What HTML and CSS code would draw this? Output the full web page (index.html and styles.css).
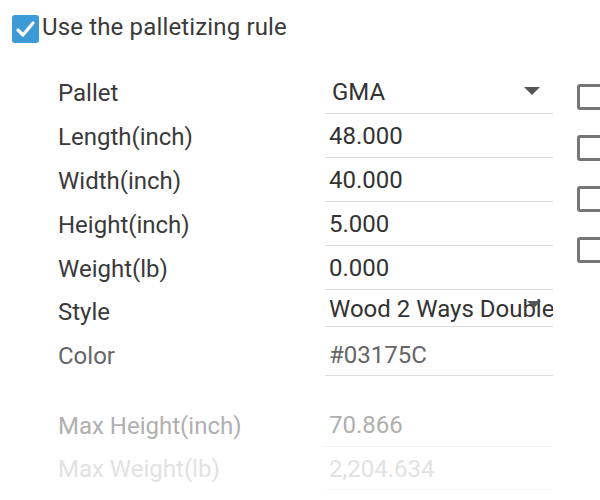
FILE: index.html
```html
<!DOCTYPE html>
<html lang="en">
  <head>
    <meta charset="UTF-8" />
    <title>Palletizing Rule</title>
    <link rel="stylesheet" href="styles.css">
  </head>

  <body>
    <!-- Rule toggle -->
    <label class="rule-toggle">
      <span class="check checked">
        <svg viewBox="0 0 27 28" width="27" height="28">
          <polyline points="6,15 11,20 21,8" fill="none" stroke="#fff" stroke-width="3.2" stroke-linecap="round" stroke-linejoin="round" />
        </svg>
      </span>
      <span class="rule-text">Use the palletizing rule</span>
    </label>

    <div class="panel">
      <!-- Pallet properties -->
      <div class="form">
        <div class="row">
          <div class="label">Pallet</div>
          <div class="value select"><span class="text">GMA</span><span class="caret"></span></div>
        </div>
        <div class="row">
          <div class="label">Length(inch)</div>
          <div class="value">48.000</div>
        </div>
        <div class="row">
          <div class="label">Width(inch)</div>
          <div class="value">40.000</div>
        </div>
        <div class="row">
          <div class="label">Height(inch)</div>
          <div class="value">5.000</div>
        </div>
        <div class="row">
          <div class="label">Weight(lb)</div>
          <div class="value">0.000</div>
        </div>
        <div class="row row-style">
          <div class="label">Style</div>
          <div class="value select clip"><span class="text">Wood 2 Ways Double</span><span class="caret small"></span></div>
        </div>
        <div class="row row-color muted">
          <div class="label">Color</div>
          <div class="value">#03175C</div>
        </div>

        <div class="row row-max faded">
          <div class="label">Max Height(inch)</div>
          <div class="value">70.866</div>
        </div>
        <div class="row row-last fainter">
          <div class="label">Max Weight(lb)</div>
          <div class="value">2,204.634</div>
        </div>
      </div>

      <!-- Option checkboxes -->
      <div class="options">
        <span class="check"></span>
        <span class="check"></span>
        <span class="check"></span>
        <span class="check"></span>
      </div>
    </div>
  </body>
</html>
```

FILE: styles.css
```css
/* Global Styles */
body {
  font-family: Roboto, "Liberation Sans", sans-serif;
  font-size: 24px;
  color: #3a3a3a;
  background-color: #fff;
  margin: 0;
  padding: 0;
  width: 600px;
  height: 500px;
  overflow: hidden;
}

/* Rule toggle */
.rule-toggle {
  display: flex;
  align-items: center;
  padding: 15px 0 0 12px;
}

.rule-text {
  margin-left: 3px;
  margin-top: -5px;
  letter-spacing: 0.15px;
}

.check {
  display: block;
  box-sizing: border-box;
  width: 27px;
  height: 28px;
  border-radius: 3px;
}

.check.checked {
  background-color: #3c9ad7;
}

.check svg {
  display: block;
}

/* Panel */
.panel {
  display: flex;
  padding-top: 27px;
}

.form {
  padding-left: 58px;
  width: 495px;
}

.row {
  display: flex;
  height: 44px;
}

.label,
.value {
  display: flex;
  align-items: center;
  box-sizing: border-box;
  padding-top: 1px;
}

.label {
  width: 267px;
}

.value {
  width: 228px;
  padding-left: 4px;
  border-bottom: 1px solid #dedede;
  color: #333;
}

.select {
  position: relative;
  padding-left: 7px;
}

.clip {
  padding-left: 4px;
  overflow: hidden;
  white-space: nowrap;
}

.caret {
  position: absolute;
  right: 13px;
  top: 17px;
  width: 0;
  height: 0;
  border-left: 8px solid transparent;
  border-right: 8px solid transparent;
  border-top: 8px solid #555;
}

.caret.small {
  right: 12px;
  top: 11px;
  border-left-width: 7px;
  border-right-width: 7px;
  border-top-width: 7px;
}

.row-style {
  height: 37px;
}

.row-style .label {
  padding-top: 7px;
}

.row-color {
  height: 49px;
}

.row-color .label,
.row-color .value {
  padding-top: 8px;
}

.muted .label,
.muted .value {
  color: #666;
}

.row-max {
  margin-top: 27px;
}

.row-last {
  height: 43px;
}

.faded .label,
.faded .value {
  color: #b0b0b0;
  border-bottom-color: #f1f1f1;
}

.fainter .label,
.fainter .value {
  color: #e2e2e2;
  border-bottom-color: #f8f8f8;
}

/* Option checkboxes */
.options {
  display: flex;
  flex-direction: column;
  gap: 25px;
  margin-left: 24px;
  padding-top: 14px;
}

.options .check {
  width: 26px;
  height: 26px;
  border: 3px solid #767676;
  border-radius: 3px;
}
```
